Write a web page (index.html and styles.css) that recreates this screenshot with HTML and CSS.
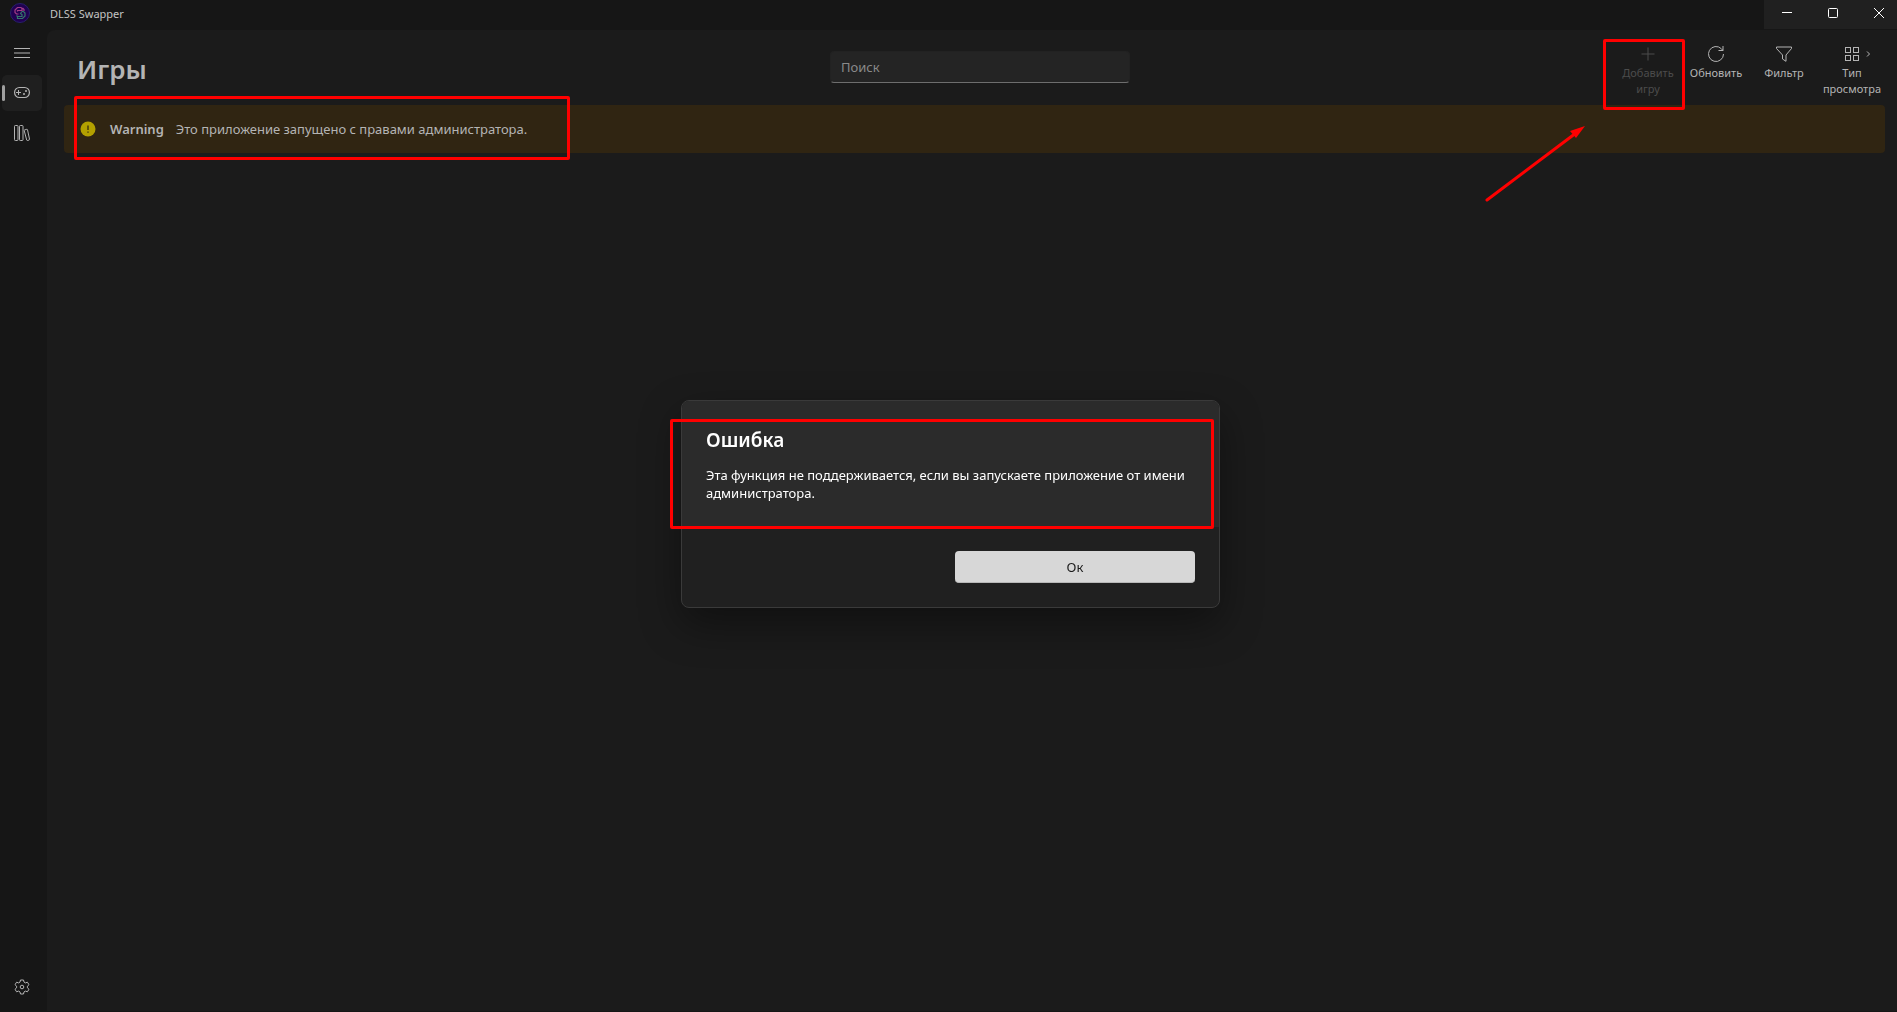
FILE: index.html
```html
<!DOCTYPE html>
<html lang="ru">
  <head>
    <meta charset="UTF-8" />
    <meta name="viewport" content="width=device-width, initial-scale=1.0" />
    <title>DLSS Swapper</title>
    <link rel="stylesheet" href="styles.css">
  </head>
  <body>
    <header class="titlebar">
      <svg class="logo" width="20" height="20" viewBox="0 0 20 20" fill="none">
        <circle cx="10" cy="10" r="9.5" fill="#210052" stroke="#28206a" />
        <path d="M11 4.500H7.500L5 7V9.500L6.500 11H8.500M7.500 8.500V7.500H12V5.500L11 4.500M12.500 5L14 6.500V8" stroke="#a23c86" stroke-width="1.200" />
        <path d="M12 8.500H13.500L15 10V13L12.500 15.500H7.500V13.500H12V11.500L10.500 10.500L12 8.500M7.500 13.500L6.500 12.500" stroke="#35756b" stroke-width="1.200" />
      </svg>
      <span class="app-name">DLSS Swapper</span>
      <div class="window-buttons">
        <button aria-label="Свернуть">
          <svg width="10" height="10" viewBox="0 0 10 10"><path d="M0 4.500H10" /></svg>
        </button>
        <button aria-label="Развернуть">
          <svg width="10" height="10" viewBox="0 0 10 10"><rect x=".5" y=".5" width="9" height="9" rx="1" /></svg>
        </button>
        <button aria-label="Закрыть">
          <svg width="10" height="10" viewBox="0 0 10 10"><path d="M0 0L10 10M10 0L0 10" /></svg>
        </button>
      </div>
    </header>

    <div class="layout">
      <nav class="sidebar">
        <button class="nav-item" aria-label="Меню">
          <svg width="16" height="16" viewBox="0 0 16 16"><path d="M0 3.500H16M0 8H16M0 12.500H16" /></svg>
        </button>
        <button class="nav-item active" aria-label="Игры">
          <svg width="16" height="16" viewBox="0 0 16 16">
            <rect x=".6" y="2.500" width="14.800" height="10" rx="4.800" stroke-width="1.200" />
            <path d="M4.500 5V10M2 7.500H7" />
            <circle class="dot" cx="12" cy="6" r="1" />
            <circle class="dot" cx="10" cy="9" r="1" />
          </svg>
        </button>
        <button class="nav-item" aria-label="Библиотека">
          <svg width="16" height="16" viewBox="0 0 16 16">
            <rect x=".5" y=".5" width="3.500" height="15" rx=".8" />
            <rect x="5.500" y=".5" width="3.500" height="15" rx=".8" />
            <path d="M10.400 5L12.800 4.300Q13.300 4.200 13.500 4.700L15.500 14.200Q15.600 14.800 15.100 15L13.500 15.500Q12.900 15.600 12.700 15L10.200 5.600Q10.100 5.100 10.400 5Z" />
          </svg>
        </button>
        <button class="nav-item settings" aria-label="Настройки">
          <svg width="16" height="16" viewBox="0 0 16 16">
            <path d="M6.500 1H9.500L10 3.100L11.500 3.900L13.400 3.200L15 5.700L13.400 7.200V8.800L15 10.300L13.400 12.800L11.500 12.100L10 12.900L9.500 15H6.500L6 12.900L4.500 12.100L2.600 12.800L1 10.300L2.600 8.800V7.200L1 5.700L2.600 3.200L4.500 3.900L6 3.100Z" stroke-linejoin="round" />
            <circle cx="8" cy="8" r="1.800" />
          </svg>
        </button>
      </nav>

      <main class="content">
        <div class="page-header">
          <h1>Игры</h1>
          <input type="text" class="search" placeholder="Поиск" aria-label="Поиск" />
          <div class="toolbar">
            <button class="tool" disabled>
              <svg width="16" height="16" viewBox="0 0 16 16"><path d="M8 1.500V14.500M1.500 8H14.500" /></svg>
              <span>Добавить игру</span>
              <i class="mark mark-add"></i>
            </button>
            <button class="tool">
              <svg width="16" height="16" viewBox="0 0 16 16"><path d="M15.500 8A7.500 7.500 0 1 1 13.300 2.700L15 4.500M15 0V4.500H10.500" /></svg>
              <span>Обновить</span>
            </button>
            <button class="tool">
              <svg width="16" height="16" viewBox="0 0 16 16"><path d="M.5 1H15.500V2.500L10 9V15.300L6.500 13V9L.5 2.500Z" stroke-linejoin="round" /></svg>
              <span>Фильтр</span>
            </button>
            <button class="tool">
              <svg width="16" height="16" viewBox="0 0 16 16">
                <rect x="1.500" y="1.500" width="5" height="5" /><rect x="9.500" y="1.500" width="5" height="5" />
                <rect x="1.500" y="9.500" width="5" height="5" /><rect x="9.500" y="9.500" width="5" height="5" />
              </svg>
              <svg class="chevron" width="6" height="8" viewBox="0 0 6 8"><path d="M1 1.500L3.500 4L1 6.500" /></svg>
              <span>Тип просмотра</span>
            </button>
            <svg class="arrow" width="104" height="80" viewBox="0 0 104 80">
              <path d="M3 76L92 9" stroke="#f00" stroke-width="3" stroke-linecap="round" />
              <path d="M101 2L86 7L92 14Z" fill="#f00" />
            </svg>
          </div>
        </div>

        <div class="banner" role="status">
          <svg width="16" height="16" viewBox="0 0 16 16">
            <circle cx="8" cy="8" r="7.500" fill="#b3a000" />
            <path d="M8 4.500V9M8 10.500V11.700" stroke="#2a2312" stroke-width="1.200" />
          </svg>
          <strong>Warning</strong>
          <span>Это приложение запущено с правами администратора.</span>
          <i class="mark mark-banner"></i>
        </div>
      </main>
    </div>

    <div class="overlay">
      <div class="dialog" role="alertdialog" aria-labelledby="dialog-title" aria-describedby="dialog-text">
        <div class="dialog-body">
          <h2 id="dialog-title">Ошибка</h2>
          <p id="dialog-text">Эта функция не поддерживается, если вы запускаете приложение от имени администратора.</p>
        </div>
        <div class="dialog-footer">
          <button class="ok">Ок</button>
        </div>
        <i class="mark mark-dialog"></i>
      </div>
    </div>
  </body>
</html>
```

FILE: styles.css
```css
* {
  margin: 0;
  padding: 0;
  box-sizing: border-box;
}
body {
  display: flex;
  flex-direction: column;
  min-height: 100vh;
  font-family: "Noto Sans", "Open Sans", sans-serif;
  font-size: 13px;
  color: #b4b4b4;
  background-color: #161616;
}
button {
  font-family: inherit;
  color: inherit;
  border: none;
  background: none;
}
svg {
  display: block;
  flex-shrink: 0;
  fill: none;
  stroke: currentColor;
}

/* title bar */
.titlebar {
  display: flex;
  height: 30px;
  padding-left: 10px;
}
.logo {
  margin-top: 3px;
  stroke: none;
}
.app-name {
  margin-left: 20px;
  font-size: 11px;
  line-height: 28px;
  color: #c4c4c4;
}
.window-buttons {
  display: flex;
  width: 133px;
  height: 29px;
  margin-left: auto;
  overflow: hidden;
  color: #fff;
  background-color: #202020;
}
.window-buttons button {
  display: flex;
  flex: 0 0 46px;
  padding-bottom: 3px;
  align-items: center;
  justify-content: center;
}

/* sidebar */
.layout {
  display: flex;
  flex: 1;
}
.sidebar {
  display: flex;
  flex-direction: column;
  gap: 4px;
  width: 47px;
  padding: 5px 5px 7px 2px;
}
.nav-item {
  position: relative;
  display: flex;
  height: 36px;
  align-items: center;
  justify-content: center;
  border-radius: 5px;
}
.nav-item.active {
  background-color: #1f1f1f;
}
.nav-item.active::before {
  content: "";
  position: absolute;
  left: 0;
  width: 3px;
  height: 16px;
  border-radius: 2px;
  background-color: #a0a0a0;
}
.nav-item .dot {
  fill: currentColor;
  stroke: none;
}
.settings {
  margin-top: auto;
}

/* page */
.content {
  flex: 1;
  margin-bottom: 1px;
  border-top-left-radius: 8px;
  background-color: #1b1b1b;
}
.page-header {
  display: grid;
  grid-template-columns: 1fr 300px 1fr;
  height: 75px;
  padding: 0 11px 0 27px;
}
h1 {
  padding: 20px 0 0 3px;
  font-size: 26px;
  font-weight: 600;
  line-height: 38px;
}
.search {
  height: 32px;
  margin-top: 21px;
  padding: 0 10px;
  font-family: inherit;
  font-size: 13px;
  color: inherit;
  border: 1px solid #222;
  border-bottom-color: #6e6e6e;
  border-radius: 4px;
  outline: none;
  background-color: #242424;
}
.search::placeholder {
  color: #8a8a8a;
}
.toolbar {
  position: relative;
  z-index: 1;
  display: flex;
  justify-content: flex-end;
}
.tool {
  position: relative;
  display: flex;
  flex-direction: column;
  gap: 3px;
  width: 68px;
  padding-top: 16px;
  align-items: center;
  font-size: 11px;
  line-height: 16px;
}
.tool:disabled {
  color: #4c4c4c;
}
.chevron {
  position: absolute;
  top: 20px;
  left: 48px;
}

/* warning banner */
.banner {
  position: relative;
  display: flex;
  height: 48px;
  margin: 0 12px 0 17px;
  padding-left: 16px;
  align-items: center;
  border-radius: 4px;
  background-color: #302512;
}
.banner svg {
  stroke: none;
}
.banner strong {
  margin: 0 12px 0 14px;
  font-weight: 600;
}

/* dialog */
.overlay {
  position: fixed;
  inset: 0;
  z-index: 2;
  display: flex;
  padding: 0 0 4px 4px;
  align-items: center;
  justify-content: center;
}
.dialog {
  position: relative;
  width: 539px;
  color: #fff;
  border: 1px solid #3a3a3a;
  border-radius: 8px;
  background-color: #202020;
  box-shadow: 0 16px 40px rgba(0, 0, 0, 0.4);
}
.dialog-body {
  padding: 25px 24px 25px;
  border-radius: 7px 7px 0 0;
  background-color: #2b2b2b;
}
h2 {
  margin-bottom: 12px;
  font-size: 19px;
  font-weight: 600;
  line-height: 28px;
}
.dialog-body p {
  line-height: 18px;
}
.dialog-footer {
  display: flex;
  padding: 24px;
  justify-content: flex-end;
}
.ok {
  width: 240px;
  height: 32px;
  font-size: 13px;
  color: #1a1a1a;
  border-bottom: 1px solid #b8b8b8;
  border-radius: 4px;
  background-color: #d7d7d7;
}

/* red annotations */
.mark {
  position: absolute;
  border: 3px solid #f00;
  border-radius: 2px;
}
.mark-banner {
  top: -9px;
  left: 10px;
  width: 496px;
  height: 64px;
}
.mark-add {
  top: 9px;
  left: -11px;
  width: 82px;
  height: 71px;
}
.mark-dialog {
  top: 18px;
  left: -12px;
  width: 544px;
  height: 110px;
}
.arrow {
  position: absolute;
  top: 94px;
  right: 298px;
  stroke: none;
}
```
